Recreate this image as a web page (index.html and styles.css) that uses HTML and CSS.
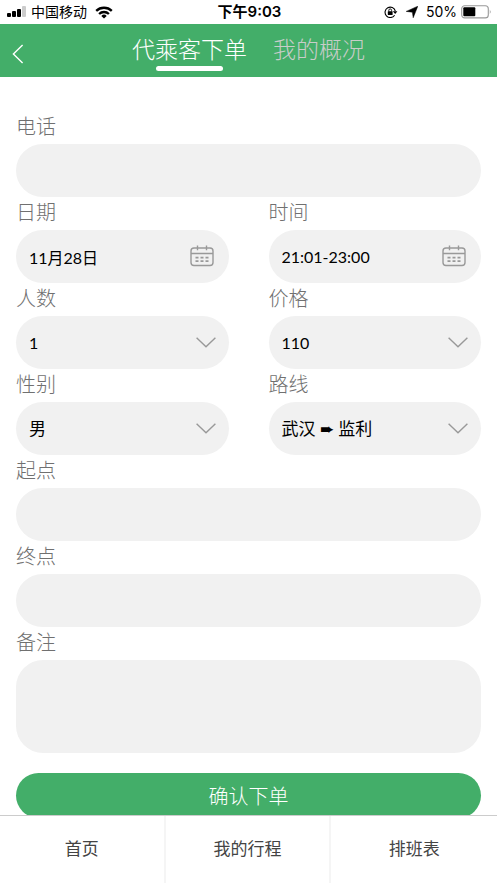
FILE: index.html
```html
<!DOCTYPE html>
<html lang="zh-CN">
<head>
<meta charset="utf-8">
<meta name="viewport" content="width=device-width, initial-scale=1">
<title>代乘客下单</title>
<link rel="stylesheet" href="styles.css">
</head>
<body>
<svg width="0" height="0" class="sprite" aria-hidden="true">
  <symbol id="calendar" viewBox="0 0 24 22">
    <g fill="none" stroke="#999" stroke-width="1.4">
      <rect x="1" y="3" width="22" height="17.5" rx="3"/>
      <path d="M1 8.5h22M7.5 .4v4.8M16.5 .4v4.8"/>
      <path stroke-width="1.7" d="M5.5 12.7h3M10.5 12.7h3M15.5 12.7h3M5.5 16.2h3M10.5 16.2h3M15.5 16.2h3"/>
    </g>
  </symbol>
  <symbol id="chevron" viewBox="0 0 20 11">
    <path d="M.6 .7 10 9.8 19.4 .7" fill="none" stroke="#999" stroke-width="1.4"/>
  </symbol>
</svg>
<div class="app">
  <div class="status">
    <div class="status-left">
      <svg width="20" height="12" viewBox="0 0 20 12" aria-hidden="true">
        <rect x="0" y="7" width="4" height="4" rx="1"/>
        <rect x="5" y="5" width="4" height="6" rx="1"/>
        <rect x="10" y="3" width="4" height="8" rx="1"/>
        <rect x="15" y="0" width="4" height="11" rx="1" fill="#ccc"/>
      </svg>
      <span>中国移动</span>
      <svg class="wifi" width="18" height="13" viewBox="0 0 18 13" aria-hidden="true">
        <g fill="none" stroke="#000" stroke-width="2.3">
          <path d="M1.2 4.9a11.2 11.2 0 0 1 15.6 0"/>
          <path d="M4.1 8a7 7 0 0 1 9.8 0"/>
        </g>
        <path d="M9 12.6 6.3 9.9a3.9 3.9 0 0 1 5.4 0z"/>
      </svg>
    </div>
    <span class="clock">下午9:03</span>
    <div class="status-right">
      <svg width="14" height="12" viewBox="0 0 14 12" aria-hidden="true">
        <path d="M10.6 9.2A5.2 5.2 0 1 1 11.3 5" fill="none" stroke="#000" stroke-width="1.1"/>
        <path d="M8.8 5.2h4.6L11.2 8z"/>
        <rect x="3.8" y="5.3" width="4.8" height="3.6" rx=".5"/>
        <path d="M4.8 5.5V4.3a1.4 1.4 0 0 1 2.8 0v1.2" fill="none" stroke="#000" stroke-width=".9"/>
      </svg>
      <svg class="locate" width="12" height="12" viewBox="0 0 12 12" aria-hidden="true">
        <path d="M11.8 .2 7.2 11.8 6.4 6.2 .2 5.4z" stroke="#000" stroke-width=".5" stroke-linejoin="round"/>
      </svg>
      <span>50%</span>
      <svg class="battery" width="31" height="14" viewBox="0 0 31 14" aria-hidden="true">
        <rect x=".7" y=".7" width="26.6" height="12.2" rx="3" fill="none" stroke="#999" stroke-width="1.1"/>
        <rect x="2.3" y="2.3" width="12" height="9" rx="1"/>
        <path d="M28.8 4.6q1.7 2.2 0 4.4z" fill="#999"/>
      </svg>
    </div>
  </div>
  <header class="topbar">
    <button class="back" type="button" aria-label="返回">
      <svg width="12" height="20" viewBox="0 0 12 20" aria-hidden="true"><path d="M10.6 1 1.4 10l9.2 9" fill="none" stroke="#fff" stroke-width="1.4"/></svg>
    </button>
    <nav class="tabs">
      <a class="tab active" href="#order">代乘客下单</a>
      <a class="tab" href="#overview">我的概况</a>
    </nav>
  </header>
  <main class="content">
    <form class="form">
      <div class="field wide">
        <label for="phone">电话</label>
        <input class="control" id="phone" type="tel">
      </div>
      <div class="field">
        <label for="date">日期</label>
        <div class="box">
          <input class="control numeric" id="date" type="text" value="11月28日" readonly>
          <svg class="icon calendar" aria-hidden="true"><use href="#calendar"/></svg>
        </div>
      </div>
      <div class="field">
        <label for="time">时间</label>
        <div class="box">
          <input class="control numeric" id="time" type="text" value="21:01-23:00" readonly>
          <svg class="icon calendar" aria-hidden="true"><use href="#calendar"/></svg>
        </div>
      </div>
      <div class="field">
        <label for="people">人数</label>
        <div class="box">
          <select class="control numeric" id="people"><option>1</option></select>
          <svg class="icon chevron" aria-hidden="true"><use href="#chevron"/></svg>
        </div>
      </div>
      <div class="field">
        <label for="price">价格</label>
        <div class="box">
          <select class="control numeric" id="price"><option>110</option></select>
          <svg class="icon chevron" aria-hidden="true"><use href="#chevron"/></svg>
        </div>
      </div>
      <div class="field">
        <label for="gender">性别</label>
        <div class="box">
          <select class="control" id="gender"><option>男</option></select>
          <svg class="icon chevron" aria-hidden="true"><use href="#chevron"/></svg>
        </div>
      </div>
      <div class="field">
        <label for="route">路线</label>
        <div class="box">
          <select class="control" id="route"><option>武汉 ➨ 监利</option></select>
          <svg class="icon chevron" aria-hidden="true"><use href="#chevron"/></svg>
        </div>
      </div>
      <div class="field wide">
        <label for="start">起点</label>
        <input class="control" id="start" type="text">
      </div>
      <div class="field wide">
        <label for="end">终点</label>
        <input class="control" id="end" type="text">
      </div>
      <div class="field wide">
        <label for="note">备注</label>
        <textarea class="control note" id="note"></textarea>
      </div>
      <button class="submit" type="submit">确认下单</button>
    </form>
  </main>
  <nav class="bottom">
    <a href="#home">首页</a>
    <a href="#trips">我的行程</a>
    <a href="#schedule">排班表</a>
  </nav>
</div>
</body>
</html>
```
FILE: styles.css
```css
* { box-sizing: border-box; }
body {
  margin: 0;
  background: #fff;
  color: #000;
  font-family: Lato, "Noto Sans CJK SC", sans-serif;
}
a { color: inherit; text-decoration: none; }
button, input, select, textarea { font: inherit; color: inherit; border: 0; margin: 0; }
svg { display: block; flex: none; }
.sprite { position: absolute; }
.app { display: flex; flex-direction: column; height: 100vh; }

.status {
  display: grid;
  grid-template-columns: 1fr auto 1fr;
  align-items: center;
  height: 24px;
  flex: none;
  padding: 0 5px 0 7px;
  font: 14px/24px Inter, "Noto Sans CJK SC", sans-serif;
}
.status-left, .status-right { display: flex; align-items: center; gap: 4px; }
.status-left .wifi { margin-left: 4px; }
.status-right { justify-content: flex-end; }
.status-right .locate { margin: 0 4px; }
.clock { font-size: 15px; font-weight: 600; }

.topbar {
  display: grid;
  grid-template-columns: 48px 1fr 48px;
  height: 53px;
  flex: none;
  background: #43ae69;
}
.back { display: flex; align-items: center; padding: 6px 12px 0; background: none; }
.tabs { display: flex; justify-content: center; gap: 26px; }
.tab {
  display: flex;
  flex-direction: column;
  align-items: center;
  padding-top: 8px;
  color: #c8cdc9;
  font-size: 23px;
  line-height: 34px;
  font-weight: 300;
}
.tab.active { color: #fff; }
.tab.active::after { content: ""; width: 67px; height: 5px; border-radius: 3px; background: #fff; }

.content { flex: 1; min-height: 0; overflow-y: auto; scrollbar-width: none; padding: 34px 16px 0; }
.form { display: grid; grid-template-columns: 1fr 1fr; column-gap: 40px; }
.wide, .submit { grid-column: 1 / -1; }
.field label { display: block; height: 33px; color: #707070; font-size: 20px; line-height: 30px; font-weight: 300; }
.box { display: grid; align-items: center; }
.box > * { grid-area: 1 / 1; }
.control {
  display: block;
  width: 100%;
  height: 53px;
  padding: 0 13px;
  border-radius: 27px;
  background: #f1f1f1;
  appearance: none;
  outline: 0;
  font-size: 17px;
}
.numeric { font-size: 16px; }
.note { height: 93px; padding: 13px; resize: none; }
.icon { justify-self: end; pointer-events: none; }
.calendar { width: 24px; height: 22px; margin: 0 15px 2px 0; }
.chevron { width: 20px; height: 11px; margin-right: 13px; }
.submit {
  height: 45px;
  margin-top: 20px;
  border-radius: 23px;
  background: #43ae69;
  color: #fff;
  font-size: 20px;
  font-weight: 300;
}

.bottom {
  display: grid;
  grid-template-columns: repeat(3, 1fr);
  height: 68px;
  flex: none;
  border-top: 1px solid #ccc;
  color: #444;
  font-size: 17px;
}
.bottom a { display: flex; align-items: center; justify-content: center; padding-bottom: 4px; }
.bottom a:not(:last-child) { border-right: 2px solid #f5f5f5; }
```
